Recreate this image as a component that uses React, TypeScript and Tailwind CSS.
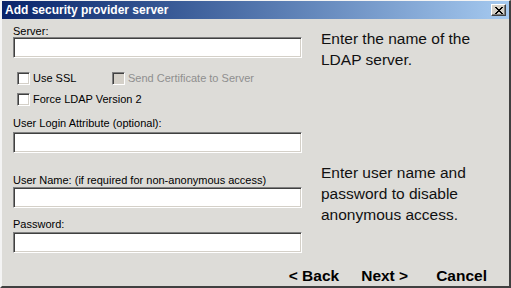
export default function App() {
  const sunken =
    "border border-t-[#808080] border-l-[#808080] border-b-white border-r-white shadow-[inset_1px_1px_0_#404040,inset_-1px_-1px_0_#d4d0c8]";

  function Checkbox({ label, disabled }: { label: string; disabled?: boolean }) {
    return (
      <label className="flex h-[13px] items-center">
        <span
          className={`h-[13px] w-[13px] shrink-0 ${sunken} ${disabled ? "bg-[#d4d0c8]" : "bg-white"}`}
        />
        <span
          className={`ml-[3px] text-[11px] leading-[11px] ${disabled ? "text-[#8f8f8f]" : "text-black"}`}
        >
          {label}
        </span>
      </label>
    );
  }

  function Field({ label, className }: { label: string; className: string }) {
    return <span className={`block text-[11px] leading-[11px] text-black ${className}`}>{label}</span>;
  }

  return (
    <div
      className="flex h-[288px] w-[511px] flex-col border-t border-l-2 border-r-2 border-b-2 border-t-[#f4f4f4] border-l-[#f4f4f4] border-r-[#404040] border-b-[#404040] bg-[#dddcd8] text-black"
      style={{ fontFamily: '"Liberation Sans", Arial, sans-serif' }}
    >
      <div className="flex h-[18px] shrink-0 items-center justify-between bg-gradient-to-r from-[#0a246a] to-[#a6caf0] pl-[3px] pr-[3px]">
        <span className="text-[12px] font-bold leading-[12px] text-white">
          Add security provider server
        </span>
        <button
          type="button"
          className="flex h-[12px] w-[15px] items-center justify-center border border-t-white border-l-white border-b-[#404040] border-r-[#404040] bg-[#d4d0c8] shadow-[inset_-1px_-1px_0_#808080]"
        >
          <svg width="8" height="7" viewBox="0 0 8 7" shapeRendering="crispEdges">
            <path
              d="M0 0h2v1H0zM6 0h2v1H6zM1 1h2v1H1zM5 1h2v1H5zM2 2h4v1H2zM3 3h2v1H3zM2 4h4v1H2zM1 5h2v1H1zM5 5h2v1H5zM0 6h2v1H0zM6 6h2v1H6z"
              fill="#000"
            />
          </svg>
        </button>
      </div>

      <div className="flex flex-1 flex-col pl-[11px] pr-[22px]">
        <div className="flex">
          <div className="flex w-[289px] flex-col">
            <Field label="Server:" className="mt-[7px]" />
            <div className={`h-[21px] w-full bg-white ${sunken}`} />

            <div className="mt-[14px] flex pl-[4px]">
              <div className="w-[95px]">
                <Checkbox label="Use SSL" />
              </div>
              <Checkbox label="Send Certificate to Server" disabled />
            </div>
            <div className="mt-[8px] pl-[4px]">
              <Checkbox label="Force LDAP Version 2" />
            </div>

            <Field label="User Login Attribute (optional):" className="mt-[12px]" />
            <div className={`mt-[3px] h-[21px] w-full bg-white ${sunken}`} />

            <Field label="User Name: (if required for non-anonymous access)" className="mt-[22px]" />
            <div className={`mt-[1px] h-[21px] w-full bg-white ${sunken}`} />

            <Field label="Password:" className="mt-[11px]" />
            <div className={`mt-[2px] h-[21px] w-full bg-white ${sunken}`} />
          </div>

          <div className="ml-[19px] flex flex-col text-[15.5px] leading-[21px] text-[#111]">
            <p className="mt-[9px]">
              Enter the name of the
              <br />
              LDAP server.
            </p>
            <p className="mt-[92px]">
              Enter user name and
              <br />
              password to disable
              <br />
              anonymous access.
            </p>
          </div>
        </div>

        <div className="mt-[15px] flex justify-end text-[15.5px] font-bold leading-[16px]">
          <span>&lt; Back</span>
          <span className="ml-[22px]">Next &gt;</span>
          <span className="ml-[28px]">Cancel</span>
        </div>
      </div>
    </div>
  );
}
